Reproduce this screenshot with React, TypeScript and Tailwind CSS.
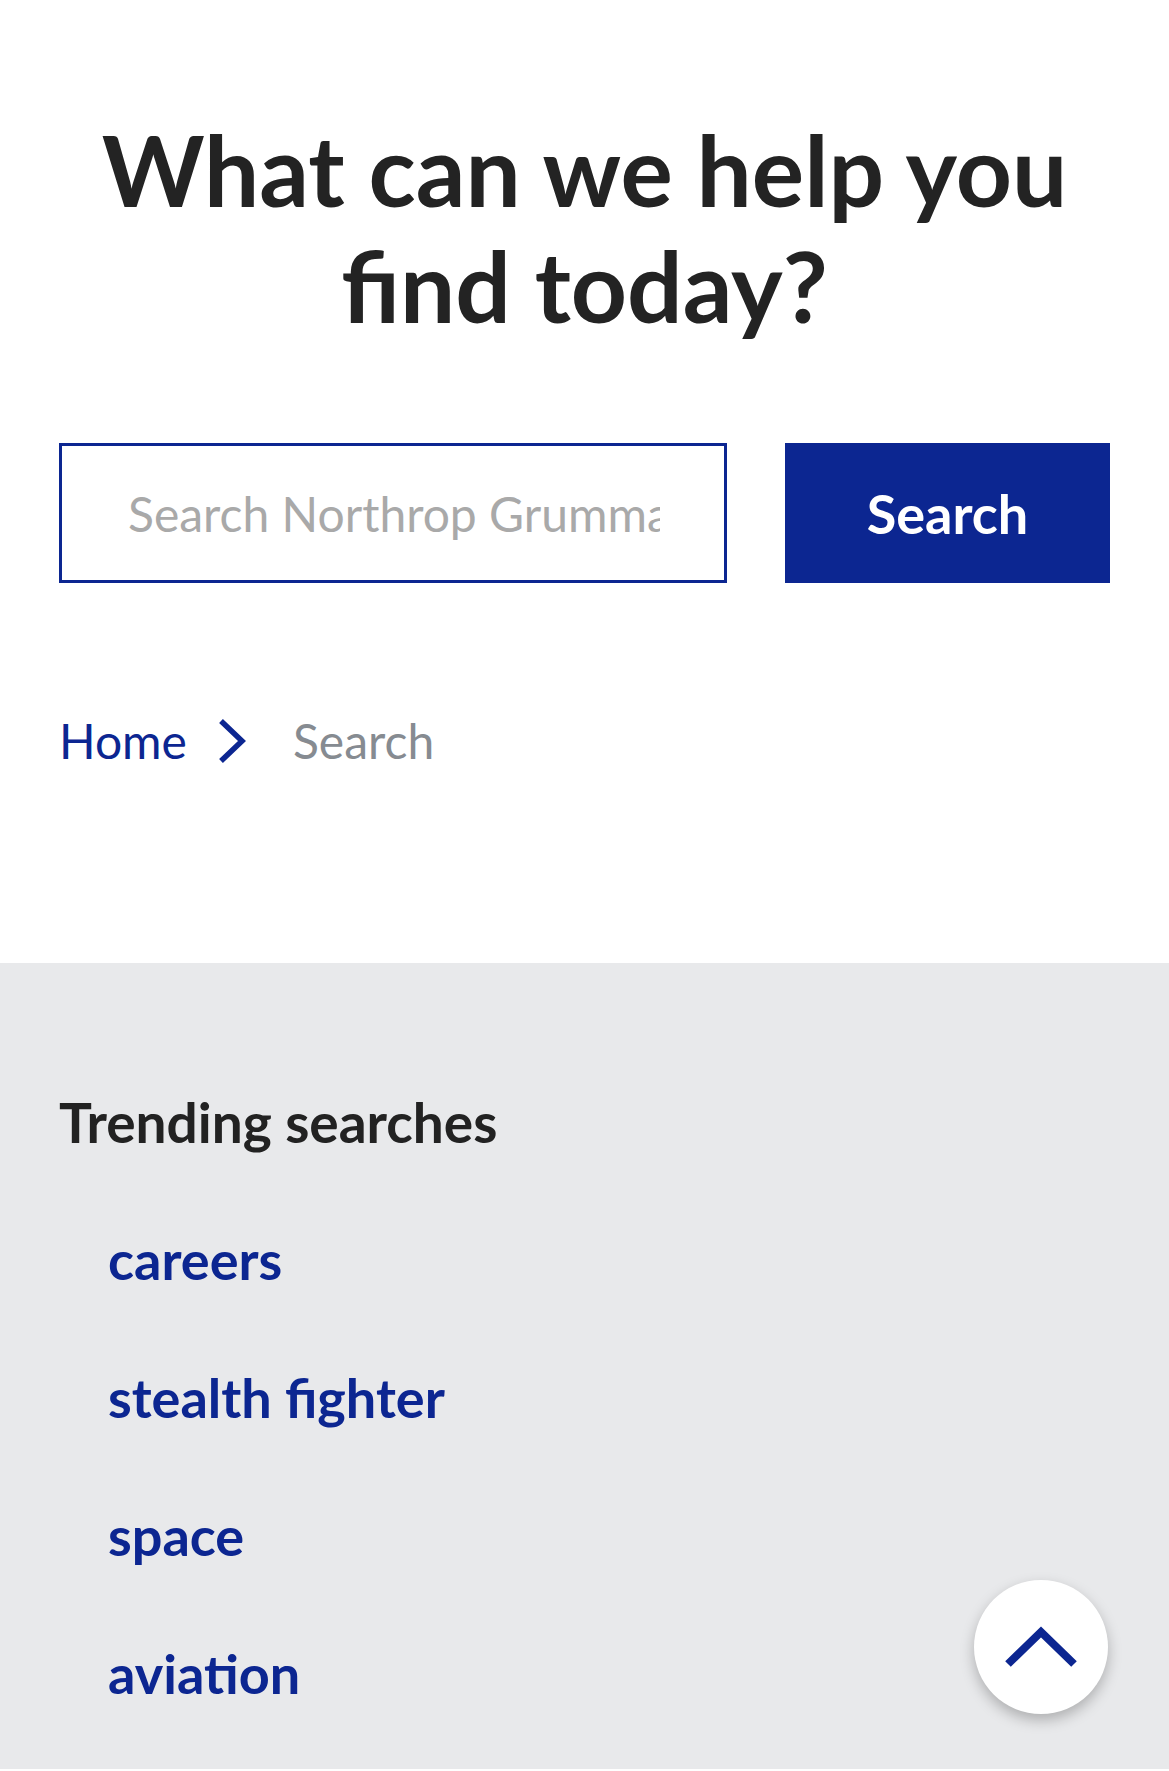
const TRENDING = ["careers", "stealth fighter", "space", "aviation"];

export default function App() {
  return (
    <div className="min-h-[1771px] bg-white font-['Lato',sans-serif] text-[#232323]">
      {/* Search hero */}
      <div className="px-[59px] pt-[111px] pb-[198px]">
        <h1 className="text-center text-[98px] leading-[116px] font-bold">
          What can we help you find today?
        </h1>

        <form className="mt-[100px] flex gap-[58px]" onSubmit={e => e.preventDefault()}>
          <input
            type="text"
            placeholder="Search Northrop Grumman"
            className="min-w-0 flex-1 h-[140px] border-[3px] border-[#0c2691] pl-[66px] pr-[64px] text-[48px] text-[#232323] outline-none placeholder:text-[#a9a9a9]"
          />
          <button type="submit" className="w-[325px] h-[140px] bg-[#0c2691] text-white text-[54px] font-bold">
            Search
          </button>
        </form>

        <nav className="mt-[134px] flex items-center text-[48px] leading-none">
          <a href="#" className="text-[#0c2691]">Home</a>
          <svg width="30" height="46" viewBox="0 0 30 46" fill="none" stroke="#0c2691" strokeWidth="5.5" className="ml-[30px] mr-[46px]">
            <path d="M4 3 L25 23 L4 43" />
          </svg>
          <span className="text-[#868b91]">Search</span>
        </nav>
      </div>

      {/* Trending */}
      <div className="relative bg-[#e8e9eb] px-[59px] pt-[124px] pb-[60px]">
        <h2 className="text-[55px] leading-[70px] font-bold text-[#222]">Trending searches</h2>
        <ul className="mt-[68px] flex flex-col gap-[68px] pl-[49px]">
          {TRENDING.map(t => (
            <li key={t}>
              <a href="#" className="text-[54px] leading-[70px] font-bold text-[#0c2691]">{t}</a>
            </li>
          ))}
        </ul>

        <button className="absolute right-[61px] bottom-[55px] w-[134px] h-[134px] rounded-full bg-white shadow-[0_6px_14px_rgba(0,0,0,0.25)] flex items-center justify-center">
          <svg width="74" height="42" viewBox="0 0 74 42" fill="none" stroke="#0c2691" strokeWidth="8">
            <path d="M4 38 L37 6 L70 38" />
          </svg>
        </button>
      </div>
    </div>
  );
}
